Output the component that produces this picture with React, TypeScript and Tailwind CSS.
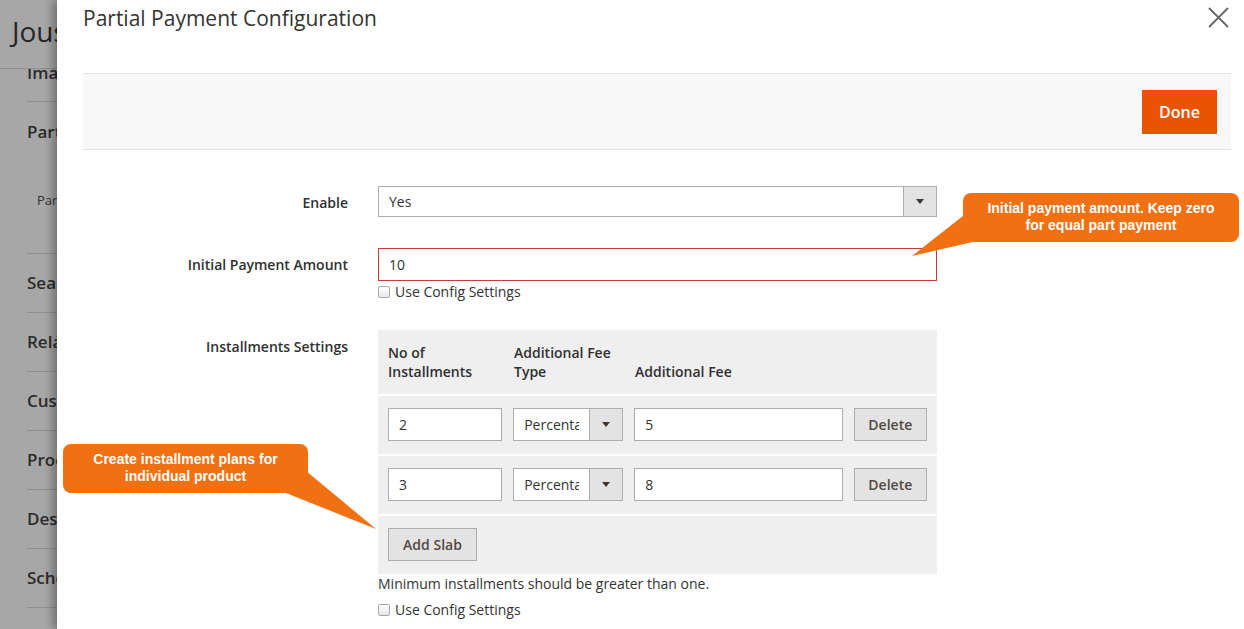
import React from 'react';

const font = { fontFamily: '"Open Sans", "Liberation Sans", sans-serif' };
const calloutFont = { fontFamily: '"Liberation Sans", Arial, sans-serif' };

const SideItem: React.FC<{ label: string }> = ({ label }) => (
  <div className="h-[59px] border-b border-[#8e8e8e] flex items-center text-[17px] font-semibold text-[#2b2b2b] whitespace-nowrap">
    {label}
  </div>
);

const Checkbox: React.FC<{ label: string }> = ({ label }) => (
  <label className="flex items-center gap-[5px] text-[14px] text-[#333] leading-none">
    <span className="w-[12px] h-[12px] border border-[#a8a8a8] rounded-[2px] bg-gradient-to-b from-white to-[#e6e6e6]" />
    {label}
  </label>
);

const SelectBox: React.FC<{ value: string; width: string; height: string }> = ({ value, width, height }) => (
  <div className={`flex border border-[#adadad] bg-white ${width} ${height}`}>
    <div className="flex-1 min-w-0 pl-[10px] pr-[10px] flex items-center">
      <span className="block overflow-hidden whitespace-nowrap text-[14px] text-[#333]">{value}</span>
    </div>
    <div className="w-[33px] shrink-0 bg-[#e3e3e3] border-l border-[#adadad] flex items-center justify-center">
      <svg width="8" height="5" viewBox="0 0 8 5"><path d="M0 0h8L4 5z" fill="#41362f" /></svg>
    </div>
  </div>
);

const TextInput: React.FC<{ value: string; error?: boolean; className?: string }> = ({ value, error, className }) => (
  <div className={`h-[33px] border ${error ? 'border-[#c43c3c]' : 'border-[#adadad]'} bg-white flex items-center pl-[10px] text-[14px] text-[#333] ${className || ''}`}>
    {value}
  </div>
);

const GrayButton: React.FC<{ label: string; className?: string }> = ({ label, className }) => (
  <button className={`h-[33px] bg-[#e3e3e3] border border-[#adadad] text-[14px] font-semibold text-[#514943] ${className || ''}`}>
    {label}
  </button>
);

const SlabRow: React.FC<{ count: string; fee: string }> = ({ count, fee }) => (
  <div className="flex gap-[11px] px-[10px] pt-[12px] pb-[13px] border-t-2 border-white">
    <TextInput value={count} className="w-[115px]" />
    <SelectBox value="Percentage" width="w-[110px]" height="h-[33px]" />
    <TextInput value={fee} className="w-[210px]" />
    <GrayButton label="Delete" className="w-[74px]" />
  </div>
);

const FormRow: React.FC<{ label: string; children: React.ReactNode }> = ({ label, children }) => (
  <div className="flex gap-[30px]">
    <div className="w-[265px] pt-[6px] text-right text-[14px] font-semibold text-[#303030]">{label}</div>
    <div className="w-[559px]">{children}</div>
  </div>
);

export default function App() {
  return (
    <div className="relative w-[1244px] h-[629px] overflow-hidden flex bg-white" style={font}>
      {/* page behind the overlay */}
      <div className="w-[57px] shrink-0 bg-[#a7a7a7] overflow-hidden">
        <div className="h-[69px] border-b border-[#8e8e8e] pl-[12px] pt-[13px] text-[28px] text-[#262626] whitespace-nowrap leading-[36px]">
          Joust
        </div>
        <div className="h-[32px] overflow-hidden pl-[27px]">
          <div className="-mt-[9px] text-[17px] font-semibold text-[#2b2b2b] whitespace-nowrap">Images</div>
        </div>
        <div className="ml-[27px] border-t border-[#8e8e8e]">
          <div className="h-[152px] border-b border-[#8e8e8e]">
            <div className="pt-[17px] text-[17px] font-semibold text-[#2b2b2b] whitespace-nowrap">Partial</div>
            <div className="pt-[46px] pl-[10px] text-[13px] text-[#333] whitespace-nowrap">Partial</div>
          </div>
          <SideItem label="Search" />
          <SideItem label="Related" />
          <SideItem label="Custom" />
          <SideItem label="Product" />
          <SideItem label="Design" />
          <SideItem label="Schedule" />
        </div>
      </div>

      {/* modal */}
      <div className="flex-1 bg-white shadow-[-5px_0_8px_rgba(0,0,0,0.3)] pl-[26px] pr-[13px]">
        <div className="h-[73px] flex justify-between">
          <h1 className="text-[21px] text-[#333] pt-[3px] leading-[30px]">Partial Payment Configuration</h1>
          <svg className="mt-[7px] mr-[2px]" width="21" height="21" viewBox="0 0 21 21">
            <path d="M1 1L20 20M20 1L1 20" stroke="#666" strokeWidth="1.8" />
          </svg>
        </div>
        <div className="h-[77px] bg-[#f8f8f8] border-y border-[#e3e3e3] flex items-center justify-end pr-[14px]">
          <button className="w-[75px] h-[44px] bg-[#eb5202] text-white text-[16px] font-semibold leading-[40px]">Done</button>
        </div>

        <div className="pt-[36px] flex flex-col">
          <FormRow label="Enable">
            <SelectBox value="Yes" width="w-full" height="h-[31px]" />
          </FormRow>

          <div className="mt-[31px]">
            <FormRow label="Initial Payment Amount">
              <TextInput value="10" error />
              <div className="mt-[4px]"><Checkbox label="Use Config Settings" /></div>
            </FormRow>
          </div>

          <div className="mt-[31px]">
            <FormRow label="Installments Settings">
              <div className="bg-[#efefef]">
                <div className="flex gap-[11px] items-end px-[10px] pt-[13px] pb-[13px] text-[14px] font-semibold text-[#303030] leading-[19px]">
                  <div className="w-[115px]">No of<br />Installments</div>
                  <div className="w-[110px]">Additional Fee<br />Type</div>
                  <div className="w-[210px]">Additional Fee</div>
                </div>
                <SlabRow count="2" fee="5" />
                <SlabRow count="3" fee="8" />
                <div className="px-[10px] pt-[12px] pb-[13px] border-t-2 border-white">
                  <GrayButton label="Add Slab" className="w-[89px]" />
                </div>
              </div>
              <div className="text-[14px] text-[#333] leading-[20px]">Minimum installments should be greater than one.</div>
              <div className="mt-[9px]"><Checkbox label="Use Config Settings" /></div>
            </FormRow>
          </div>
        </div>
      </div>

      {/* callouts */}
      <svg className="absolute left-0 top-0 pointer-events-none" width="1244" height="629">
        <polygon points="968,212 912,256 990,238" fill="#f07012" />
        <polygon points="300,466 376,529 276,489" fill="#f07012" />
      </svg>
      <div
        className="absolute left-[963px] top-[193px] w-[276px] h-[49px] rounded-[8px] bg-[#f07012] text-white text-[14px] font-bold text-center leading-[17px] pt-[7px]"
        style={calloutFont}
      >
        Initial payment amount. Keep zero<br />for equal part payment
      </div>
      <div
        className="absolute left-[63px] top-[444px] w-[245px] h-[49px] rounded-[8px] bg-[#f07012] text-white text-[14px] font-bold text-center leading-[17px] pt-[7px]"
        style={calloutFont}
      >
        Create installment plans for<br />individual product
      </div>
    </div>
  );
}
